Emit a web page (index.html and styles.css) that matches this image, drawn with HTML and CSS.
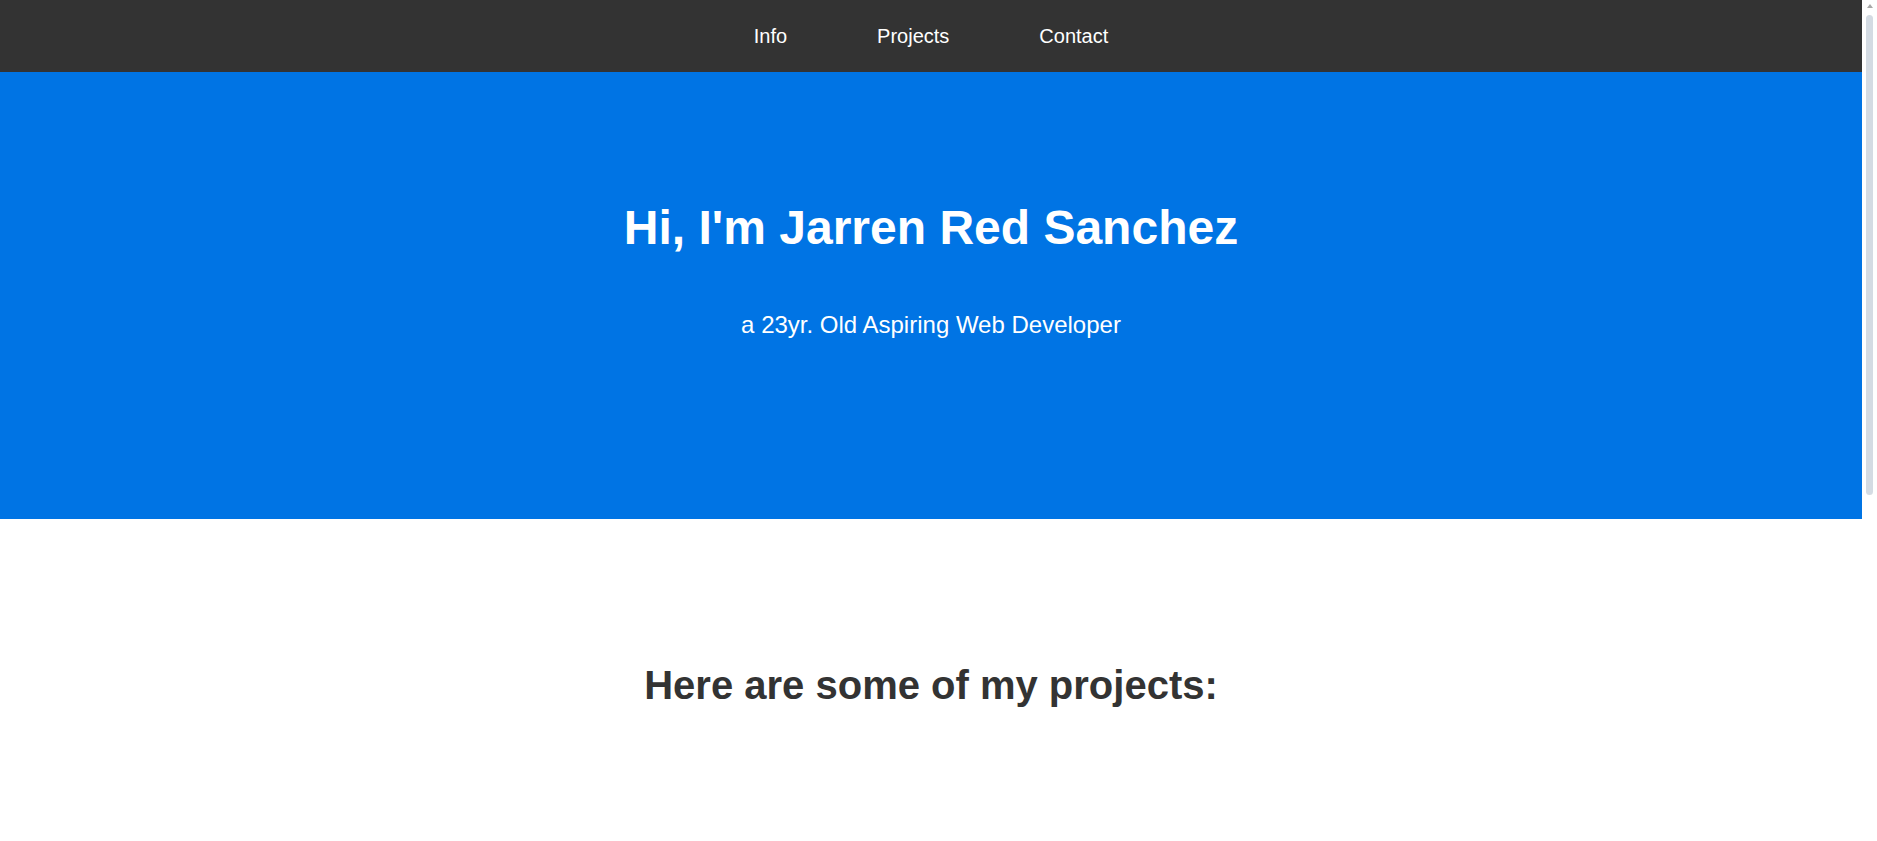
FILE: index.html
```html
<!DOCTYPE html>
<html lang="en">
<head>
<meta charset="utf-8">
<title>Jarren Red Sanchez</title>
<link rel="stylesheet" href="styles.css">
</head>
<body>
  <nav class="nav">
    <a class="nav-link" href="#welcome-section">Info</a>
    <a class="nav-link" href="#projects">Projects</a>
    <a class="nav-link" href="#contact">Contact</a>
  </nav>
  <section class="hero" id="welcome-section">
    <h1 class="hero-title">Hi, I'm Jarren Red Sanchez</h1>
    <p class="hero-sub">a 23yr. Old Aspiring Web Developer</p>
  </section>
  <section class="projects" id="projects">
    <h2 class="projects-title">Here are some of my projects:</h2>
  </section>
</body>
</html>
```
FILE: styles.css
```css
html, body {
  margin: 0;
  padding: 0;
}
body {
  font-family: "Liberation Sans", Arial, sans-serif;
  background: #ffffff;
  color: #333333;
  padding-right: 15px;
}
/* scrollbar look-alike (the browser hides its own) */
body::before {
  content: "";
  position: fixed;
  top: 4px;
  right: 4px;
  width: 0;
  height: 0;
  border-left: 3.5px solid transparent;
  border-right: 3.5px solid transparent;
  border-bottom: 4px solid #a8a8a8;
}
body::after {
  content: "";
  position: fixed;
  top: 15px;
  right: 4px;
  width: 7px;
  height: 480px;
  background: #d4dbe3;
  border-radius: 4px;
}
.nav {
  height: 72px;
  background: #333333;
  display: flex;
  justify-content: center;
  align-items: center;
  gap: 90px;
}
.nav-link {
  color: #ffffff;
  text-decoration: none;
  font-size: 20px;
}
.hero {
  background: #0074e4;
  color: #ffffff;
  text-align: center;
  padding: 128px 0 180px;
}
.hero-title {
  margin: 0;
  font-size: 48px;
  font-weight: bold;
}
.hero-sub {
  margin: 56px 0 0;
  font-size: 24px;
}
.projects {
  text-align: center;
  padding: 144px 0 0;
  min-height: 905px;
  box-sizing: border-box;
}
.projects-title {
  margin: 0;
  font-size: 40px;
  font-weight: bold;
  color: #333333;
}
```
